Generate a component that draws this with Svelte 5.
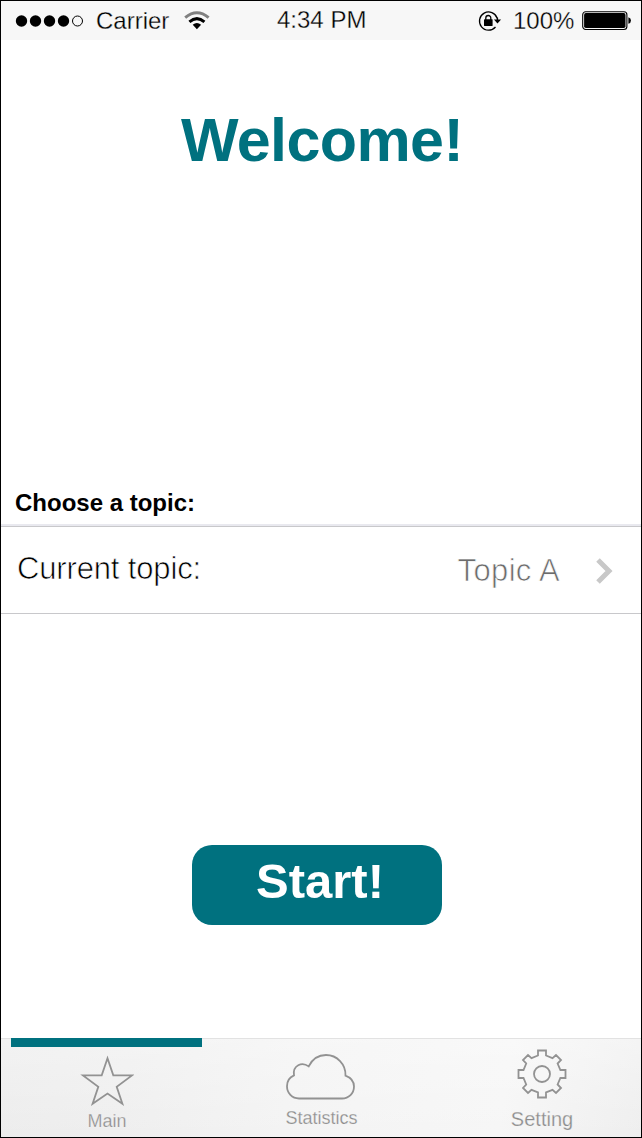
<script>
  const bars = [0, 1, 2, 3, 4];
  let active = $state('Main');
</script>

<div class="phone">
  <header class="status">
    <div class="left">
      <svg width="70" height="14" viewBox="0 0 70 14" aria-hidden="true">
        {#each bars as i}
          {#if i < 4}
            <circle cx={6.5 + i * 14} cy="7" r="5.7" />
          {:else}
            <circle cx="62.5" cy="7" r="5" fill="none" stroke="#000" stroke-width="1" />
          {/if}
        {/each}
      </svg>
      <span class="carrier">Carrier</span>
      <svg class="wifi" width="26" height="20" viewBox="0 0 26 20" aria-hidden="true">
        <path d="M1.2 6.6 Q12.9 -3 24.6 6.6" fill="none" stroke="#808080" stroke-width="3" />
        <path d="M5.4 10.8 Q12.9 4.4 20.4 10.8" fill="none" stroke="#000" stroke-width="3" />
        <path d="M8.7 13.8 Q12.9 10.2 17.1 13.8 L12.9 18.3 Z" />
      </svg>
    </div>
    <span class="time">4:34 PM</span>
    <div class="right">
      <svg width="24" height="22" viewBox="0 0 24 22" aria-hidden="true">
        <path d="M19.2 8.2 A9.1 9.1 0 1 0 17.5 17" fill="none" stroke="#000" stroke-width="1.3" />
        <path d="M19.4 7.6 V11" stroke="#000" stroke-width="1.4" />
        <path d="M15.9 9.6 H23.1 L19.5 13.4 Z" />
        <rect x="6" y="9.3" width="8.6" height="6.7" rx=".4" />
        <path d="M7.8 10 V8 a2.5 2.5 0 0 1 5 0 V10" fill="none" stroke="#000" stroke-width="1.3" />
      </svg>
      <span class="percent">100%</span>
      <svg class="battery" width="50" height="20" viewBox="0 0 50 20" aria-hidden="true">
        <rect x=".7" y=".7" width="44.2" height="17.8" rx="3" fill="none" stroke="#000" stroke-width="1.1" />
        <rect x="2.1" y="2.1" width="41.4" height="15" rx="1.8" />
        <path d="M46.4 6.3 Q49 7 49 9.5 T46.4 12.8 Z" />
      </svg>
    </div>
  </header>

  <main>
    <h1>Welcome!</h1>
    <h2>Choose a topic:</h2>
    <button class="row">
      <span class="label">Current topic:</span>
      <span class="value">Topic A</span>
      <svg width="18" height="26" viewBox="0 0 18 26" aria-hidden="true">
        <path d="M2 2 L13 13 L2 24" fill="none" stroke="#c8c8c8" stroke-width="5" />
      </svg>
    </button>
    <button class="start">Start!</button>
  </main>

  <nav>
    <button class="tab main" class:active={active === 'Main'} onclick={() => (active = 'Main')}>
      <svg width="54" height="51" viewBox="0 0 54 51" aria-hidden="true">
        <path d="M27.5 3.2 L33.3 20.4 H52 L36.7 31.8 L42.4 48.8 L27.5 38.6 L12.6 48.8 L18.3 31.8 L3 20.4 H21.7 Z" />
      </svg>
      <span>Main</span>
    </button>
    <button class="tab stats" class:active={active === 'Statistics'} onclick={() => (active = 'Statistics')}>
      <svg width="70" height="47" viewBox="0 0 70 47" aria-hidden="true">
        <path d="M14 45.5 C7 45.5 2 40 2 33.3 C2 28.2 4.8 24.2 9 22.4 C7.4 12.3 17 8.3 23.7 13.4 C27.5 5.8 33.8 2 41 2 C52 2 61 11.2 60.5 22.6 C65.3 24.4 69 28.4 69 33.5 C69 40.5 63.7 45.5 57 45.5 Z" />
      </svg>
      <span>Statistics</span>
    </button>
    <button class="tab setting" class:active={active === 'Setting'} onclick={() => (active = 'Setting')}>
      <svg width="50" height="50" viewBox="0 0 50 50" aria-hidden="true">
        <path d="M21 1.5 H29 V6.5 L35.5 9.2 L39 6 L44 11 L40.6 14.5 L43.4 21 H48.5 V29 H43.4 L40.6 35.5 L44 39 L39 44 L35.5 40.8 L29 43.4 V48.5 H21 V43.4 L14.5 40.8 L11 44 L6 39 L9.2 35.5 L6.5 29 H1.5 V21 H6.5 L9.2 14.5 L6 11 L11 6 L14.5 9.2 L21 6.5 Z" />
        <circle cx="25" cy="25" r="8" />
      </svg>
      <span>Setting</span>
    </button>
  </nav>
</div>

<style>
  .phone {
    box-sizing: border-box;
    width: 642px;
    height: 1138px;
    border: 1px solid #000;
    background: #fff;
    display: flex;
    flex-direction: column;
    overflow: hidden;
    font-family: 'Liberation Sans', Arial, sans-serif;
    color: #000;
  }
  button {
    font: inherit;
    color: inherit;
    border: 0;
    padding: 0;
    background: none;
    text-align: left;
  }
  svg { display: block; flex: none; }
  .status {
    height: 39px;
    flex: none;
    display: grid;
    grid-template-columns: 276px 1fr 163px;
    align-items: center;
    background: #f7f7f7;
    font-size: 24px;
    line-height: 38px;
    white-space: nowrap;
  }
  .left, .right { display: flex; align-items: center; }
  .left { padding-left: 14px; }
  .carrier { margin-left: 11px; width: 88px; }
  .status span {
    -webkit-text-stroke: 0.3px #f7f7f7;
  }
  .time { margin-top: -1px; }
  .percent { margin-left: 11px; width: 69px; }
  .right { margin-left: 0; }
  main {
    flex: 1;
    display: flex;
    flex-direction: column;
  }
  h1, h2 { margin: 0; }
  h1 {
    margin-top: 64px;
    padding-left: 2px;
    text-align: center;
    font-size: 61px;
    line-height: 72px;
    letter-spacing: -0.6px;
    color: #00717f;
  }
  h2 {
    margin-top: 312px;
    padding-left: 14px;
    font-size: 24px;
    line-height: 30px;
  }
  .row {
    margin-top: 6px;
    height: 90px;
    box-sizing: border-box;
    border-top: 2px solid #e9e9ef;
    border-bottom: 1px solid #c8c8cb;
    box-shadow: inset 0 1px #c8c8cb;
    display: flex;
    align-items: center;
    padding: 0 27px 0 16px;
    font-size: 31px;
    line-height: 36px;
  }
  .row svg { margin-top: 2px; }
  .label { flex: 1; margin-top: -1px; letter-spacing: -0.15px; -webkit-text-stroke: 0.7px #fff; }
  .value { color: #6c6c6c; margin: 2px 36px 0 0; letter-spacing: 0.35px; -webkit-text-stroke: 0.7px #fff; }
  .start {
    margin: 231px 0 0 191px;
    width: 250px;
    height: 80px;
    border-radius: 20px;
    background: #00717f;
    color: #fff;
    font-size: 49px;
    font-weight: bold;
    line-height: 56px;
    padding: 0 0 8px 64px;
  }
  nav {
    flex: none;
    height: 99px;
    box-sizing: border-box;
    border-top: 1px solid #e2e2e2;
    display: grid;
    grid-template-columns: 212px 217px 1fr;
    background:
      linear-gradient(#ffffff55, #ffffff00),
      linear-gradient(100deg, #ececec 0%, #eeeeee 20%, #f3f3f3 45%, #f6f6f6 78%, #eeeeee 100%);
  }
  .tab {
    display: flex;
    flex-direction: column;
    align-items: center;
    color: #8c8c8c;
    font-size: 18px;
    line-height: 22px;
  }
  .tab svg { fill: none; stroke: #929292; stroke-width: 1.8; }
  .tab span { -webkit-text-stroke: 0.25px #f1f1f1; }
  .active { position: relative; }
  .active::before {
    content: '';
    position: absolute;
    left: 10px;
    top: -1px;
    width: 191px;
    height: 9px;
    background: #00717f;
  }
  .main svg { margin-top: 16px; }
  .main span { margin-top: 4px; }
  .stats svg { margin: 14px 3px 0 0; }
  .stats span { margin-top: 7px; }
  .setting svg { margin: 10px 0 0 2px; }
  .setting { font-size: 20px; padding-left: 10px; }
  .setting span { margin: 9px 0 0 3px; }
</style>
